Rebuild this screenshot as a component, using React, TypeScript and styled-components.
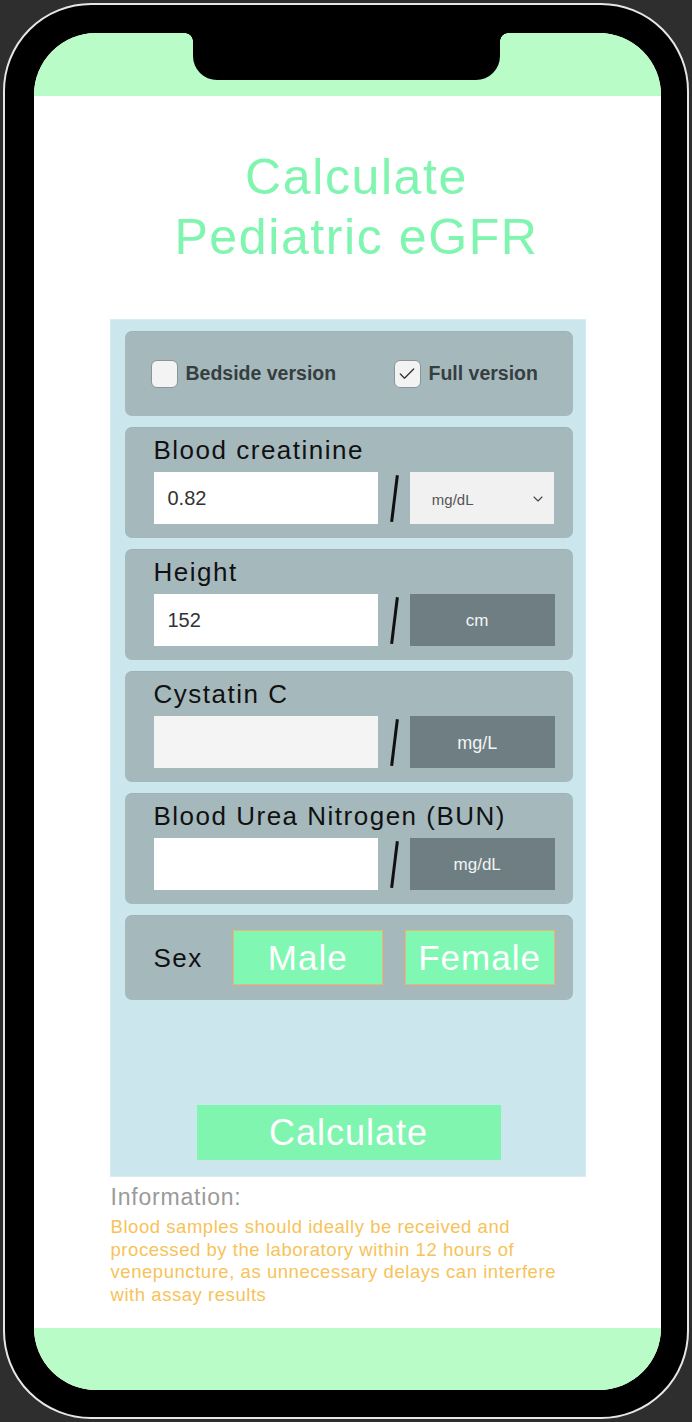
import React from 'react';
import styled, { createGlobalStyle } from 'styled-components';
import { Check, ChevronDown } from 'lucide-react';

const GlobalStyle = createGlobalStyle`
    html, body {
        margin: 0;
        padding: 0;
        background: #2e2e2e;
    }
    body {
        font-family: "Liberation Sans", Arial, sans-serif;
    }
`;

const Phone = styled.div`
    box-sizing: border-box;
    width: 686px;
    height: 1416px;
    margin: 3px;
    padding: 28px 26px 27px 29px;
    background: #000;
    border: 2px solid #e6e6e6;
    border-radius: 88px;
`;

const Screen = styled.div`
    position: relative;
    width: 627px;
    height: 1357px;
    border-radius: 62px;
    overflow: hidden;
    background: #fff;
    display: flex;
    flex-direction: column;
`;

const Band = styled.div`
    flex: 0 0 ${(p: { $h: number }) => p.$h}px;
    background: #bafcc8;
`;

// the camera cut-out on top of the screen
const Notch = styled.div`
    position: absolute;
    top: 0;
    left: 159px;
    width: 307px;
    height: 47px;
    background: #000;
    border-radius: 0 0 24px 24px;

    &::before, &::after {
        content: '';
        position: absolute;
        top: 0;
        width: 8px;
        height: 8px;
    }
    &::before {
        left: -8px;
        background: radial-gradient(circle at 0 100%, transparent 7.5px, #000 8px);
    }
    &::after {
        right: -8px;
        background: radial-gradient(circle at 100% 100%, transparent 7.5px, #000 8px);
    }
`;

const Content = styled.div`
    flex: 1;
    display: flex;
    flex-direction: column;
    align-items: center;
`;

const Title = styled.h1`
    margin: 51px 0 0 0;
    padding-left: 18px;
    font-size: 50px;
    font-weight: 400;
    line-height: 60px;
    letter-spacing: 1.6px;
    text-align: center;
    color: #80f5b0;
`;

const Card = styled.div`
    box-sizing: border-box;
    width: 476px;
    margin: 52px 0 0 0;
    padding: 11px 12px 16px 14px;
    background: #cbe6ed;
    border: 1px solid #d6ecf1;
    display: flex;
    flex-direction: column;
    gap: 11px;
`;

const Panel = styled.div`
    box-sizing: border-box;
    height: 111px;
    background: #a5b9bd;
    border-radius: 7px;
    box-shadow: inset 0 1px 0 rgba(0, 0, 0, 0.04);
    padding: 8px 18px 0 29px;
`;

const ToggleRow = styled(Panel)`
    height: 85px;
    padding: 0 18px 0 26px;
    display: flex;
    align-items: center;
`;

const CheckItem = styled.label`
    display: flex;
    align-items: center;
    gap: 8px;
    width: ${(p: { $w: number }) => p.$w}px;
    font-size: 19.5px;
    font-weight: 700;
    color: #363e40;
    white-space: nowrap;
`;

const Box = styled.span`
    box-sizing: border-box;
    flex: 0 0 27px;
    height: 28px;
    border-radius: 6px;
    background: #f3f3f3;
    border: 1px solid #8a9597;
    display: flex;
    align-items: center;
    justify-content: center;
    color: #333;
`;

const Label = styled.div`
    font-size: 26px;
    line-height: 30px;
    letter-spacing: 1.5px;
    color: #111;
`;

const InputRow = styled.div`
    margin-top: 7px;
    display: flex;
    align-items: center;
`;

const Field = styled.div<{ $bg?: string }>`
    box-sizing: border-box;
    width: 225px;
    height: 52px;
    padding-left: 14px;
    background: ${p => p.$bg || '#fff'};
    display: flex;
    align-items: center;
    font-size: 20px;
    color: #333;
`;

const Slash = styled.div`
    width: 32px;
    height: 52px;
    display: flex;
    align-items: center;
    justify-content: center;

    &::before {
        content: '';
        width: 2.5px;
        height: 47px;
        background: #111;
        transform: rotate(7deg);
    }
`;

const Unit = styled.div<{ $size?: number }>`
    width: 145px;
    height: 52px;
    background: #6e7e82;
    color: #f2f4f4;
    font-size: ${p => p.$size || 17}px;
    display: flex;
    align-items: center;
    justify-content: center;
    padding: 2px 10px 0 0;
    box-sizing: border-box;
`;

const Select = styled.div`
    box-sizing: border-box;
    width: 145px;
    height: 52px;
    background: #f1f1f1;
    color: #555;
    font-size: 15px;
    padding: 2px 8px 0 22px;
    display: flex;
    align-items: center;
    justify-content: space-between;
`;

const SexRow = styled(Panel)`
    height: 85px;
    padding: 0 18px 0 29px;
    display: flex;
    align-items: center;
`;

const SexButton = styled.button`
    box-sizing: border-box;
    width: 151px;
    height: 55px;
    margin-left: ${(p: { $ml: number }) => p.$ml}px;
    background: #80f8b4;
    border: 1px solid #f0b46a;
    color: #fff;
    font-family: inherit;
    font-size: 35px;
    letter-spacing: 1px;
    padding: 0;
`;

const CalcButton = styled.button`
    align-self: center;
    margin-top: 94px;
    width: 304px;
    height: 55px;
    background: #80f5b0;
    border: none;
    color: #fff;
    font-family: inherit;
    font-size: 36px;
    letter-spacing: 1px;
    padding: 0;
`;

const Info = styled.div`
    width: 476px;
    padding: 6px 0 0 1px;
    box-sizing: border-box;
`;

const InfoTitle = styled.div`
    font-size: 23px;
    line-height: 28px;
    letter-spacing: 0.8px;
    color: #9a9a9a;
`;

const InfoText = styled.p`
    margin: 5px 0 0 0;
    width: 462px;
    font-size: 18.5px;
    line-height: 22.6px;
    letter-spacing: 0.55px;
    color: #f6c35a;
`;

const InputPanel: React.FC<{ label: string; value?: string; bg?: string; children: React.ReactNode }> = ({ label, value, bg, children }) => (
    <Panel>
        <Label>{label}</Label>
        <InputRow>
            <Field $bg={bg}>{value}</Field>
            <Slash />
            {children}
        </InputRow>
    </Panel>
);

export default function App() {
    return (
        <>
            <GlobalStyle />
            <Phone>
                <Screen>
                    <Band $h={63} />
                    <Notch />
                    <Content>
                        <Title>Calculate<br />Pediatric eGFR</Title>
                        <Card>
                            <ToggleRow>
                                <CheckItem $w={243}><Box /> Bedside version</CheckItem>
                                <CheckItem $w={160}><Box><Check size={20} strokeWidth={1.6} /></Box> Full version</CheckItem>
                            </ToggleRow>
                            <InputPanel label="Blood creatinine" value="0.82">
                                <Select>mg/dL <ChevronDown size={16} strokeWidth={1.6} color="#444" /></Select>
                            </InputPanel>
                            <InputPanel label="Height" value="152">
                                <Unit $size={17}>cm</Unit>
                            </InputPanel>
                            <InputPanel label="Cystatin C" bg="#f4f4f4">
                                <Unit $size={18}>mg/L</Unit>
                            </InputPanel>
                            <InputPanel label="Blood Urea Nitrogen (BUN)">
                                <Unit $size={17}>mg/dL</Unit>
                            </InputPanel>
                            <SexRow>
                                <Label>Sex</Label>
                                <SexButton $ml={30}>Male</SexButton>
                                <SexButton $ml={22}>Female</SexButton>
                            </SexRow>
                            <CalcButton>Calculate</CalcButton>
                        </Card>
                        <Info>
                            <InfoTitle>Information:</InfoTitle>
                            <InfoText>
                                Blood samples should ideally be received and processed by the laboratory within 12 hours of venepuncture, as unnecessary delays can interfere with assay results
                            </InfoText>
                        </Info>
                    </Content>
                    <Band $h={62} />
                </Screen>
            </Phone>
        </>
    );
}
